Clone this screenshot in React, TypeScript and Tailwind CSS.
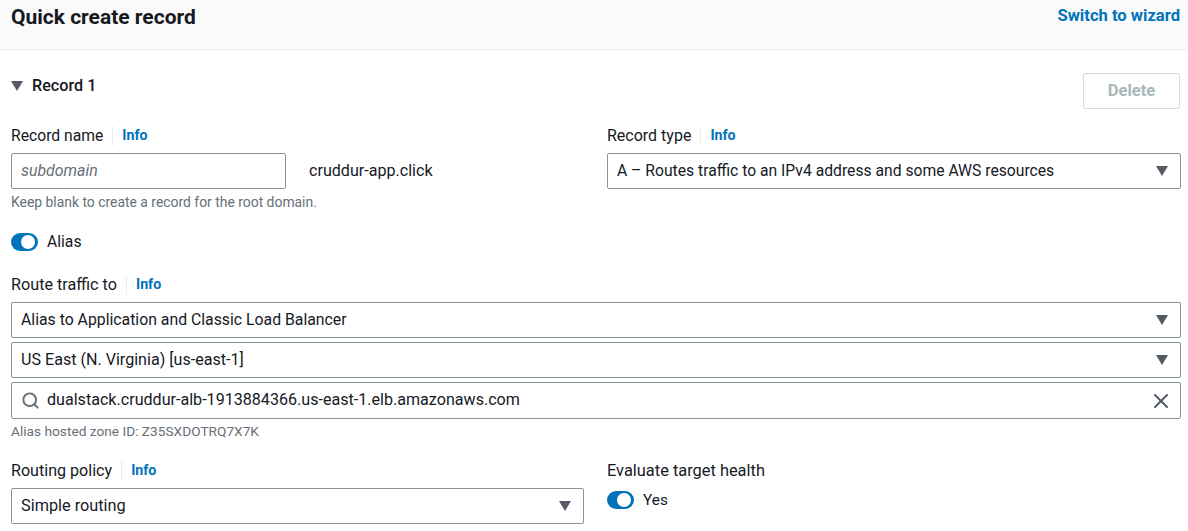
import React from 'react';
import { Search, X } from 'lucide-react';

const Caret = () => (
  <svg width="12" height="10" viewBox="0 0 12 10" className="shrink-0">
    <path d="M0 0h12L6 10z" fill="#545b64" />
  </svg>
);

const Label = ({ text, size = 'text-[16px]' }: { text: string; size?: string }) => (
  <div className={`flex h-[22px] items-center gap-[9px] ${size} text-[#16191f]`}>
    <span>{text}</span>
    <span className="h-[20px] w-px bg-[#eaeded]" />
    <span className="text-[14.2px] font-bold text-[#0073bb]">Info</span>
  </div>
);

const Select = ({ value, size = 'text-[16px]' }: { value: string; size?: string }) => (
  <div className={`flex h-[36px] items-center justify-between rounded-[2px] border border-[#879596] bg-white pl-[9px] pr-[12px] ${size} text-[#16191f]`}>
    <span>{value}</span>
    <Caret />
  </div>
);

const Toggle = () => (
  <div className="flex h-[18px] w-[27px] items-center justify-end rounded-full bg-[#0073bb] pr-[3px]">
    <div className="h-[14px] w-[14px] rounded-full bg-white" />
  </div>
);

export default function App() {
  return (
    <div className="min-h-[531px] w-[1188px] overflow-hidden bg-white font-['Roboto',sans-serif] text-[#16191f]">
      <header className="flex h-[50px] items-start justify-between border-b border-[#eaeded] bg-[#fafafa] pl-[11px] pr-[8px]">
        <h1 className="mt-[5px] text-[21px] leading-[24px] font-bold">Quick create record</h1>
        <a className="mt-[6px] text-[16.6px] leading-[20px] font-bold text-[#0073bb]">Switch to wizard</a>
      </header>

      <main className="pl-[11px] pr-[7px]">
        <div className="mt-[23px] flex items-start justify-between">
          <div className="mt-[3px] flex items-center gap-[9px] text-[16.2px] leading-[20px] font-medium">
            <Caret />
            <span>Record 1</span>
          </div>
          <button className="mr-[1px] h-[36px] w-[97px] rounded-[2px] border border-[#d5dbdb] text-[16.6px] font-bold text-[#aab7b8]">
            Delete
          </button>
        </div>

        <div className="mt-[16px] grid grid-cols-[573px_574px] gap-x-[23px]">
          <div>
            <Label text="Record name" size="text-[15.7px]" />
            <div className="mt-[6px] flex items-center">
              <div className="flex h-[36px] w-[275px] items-center rounded-[2px] border border-[#879596] pl-[9px] text-[15.9px] text-[#687078] italic">
                subdomain
              </div>
              <span className="ml-[23px] text-[16.1px]">cruddur-app.click</span>
            </div>
            <p className="mt-[5px] text-[13.9px] leading-[16px] text-[#687078]">
              Keep blank to create a record for the root domain.
            </p>
          </div>
          <div>
            <Label text="Record type" />
            <div className="mt-[6px]">
              <Select value="A – Routes traffic to an IPv4 address and some AWS resources" size="text-[15.7px]" />
            </div>
          </div>
        </div>

        <div className="mt-[22px] flex items-center gap-[9px] text-[15.7px] leading-[20px]">
          <Toggle />
          <span>Alias</span>
        </div>

        <div className="mt-[22px]">
          <Label text="Route traffic to" size="text-[16.2px]" />
          <div className="mt-[6px] flex flex-col gap-[4px]">
            <Select value="Alias to Application and Classic Load Balancer" size="text-[15.8px]" />
            <Select value="US East (N. Virginia) [us-east-1]" size="text-[16.1px]" />
            <div className="flex h-[37px] items-center justify-between rounded-[2px] border border-[#879596] pl-[9px] pr-[7px] text-[16.1px]">
              <div className="flex items-center gap-[7px]">
                <Search size={19} strokeWidth={2.5} className="text-[#687078]" />
                <span>dualstack.cruddur-alb-1913884366.us-east-1.elb.amazonaws.com</span>
              </div>
              <X size={24} strokeWidth={2} className="text-[#545b64]" />
            </div>
          </div>
          <p className="mt-[4px] text-[13.7px] leading-[16px] text-[#687078]">Alias hosted zone ID: Z35SXDOTRQ7X7K</p>
        </div>

        <div className="mt-[21px] grid grid-cols-[573px_574px] gap-x-[23px]">
          <div>
            <Label text="Routing policy" size="text-[16.1px]" />
            <div className="mt-[6px]">
              <Select value="Simple routing" size="text-[16.3px]" />
            </div>
          </div>
          <div>
            <div className="h-[21px] text-[16.4px] leading-[21px] text-[#16191f]">Evaluate target health</div>
            <div className="mt-[9px] flex items-center gap-[9px] text-[15.4px] leading-[20px]">
              <Toggle />
              <span>Yes</span>
            </div>
          </div>
        </div>
      </main>
    </div>
  );
}
